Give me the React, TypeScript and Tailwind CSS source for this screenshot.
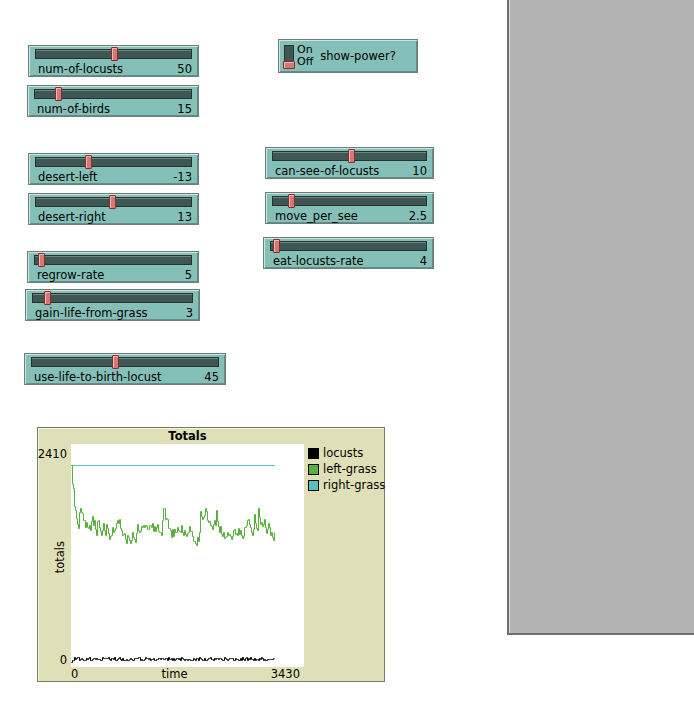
import React from "react";

type SliderProps = {
  x: number;
  y: number;
  w: number;
  label: string;
  value: string;
  thumb: number;
};

// widgets sit at fixed spots on the NetLogo interface canvas
function Slider({ x, y, w, label, value, thumb }: SliderProps) {
  return (
    <div
      className="absolute h-[32px] bg-[#84c0b7] border border-[#6f7d7a] shadow-[inset_1px_1px_0_#c9e6e1,inset_-1px_-1px_0_#5f8f88]"
      style={{ left: x, top: y, width: w }}
    >
      <div className="relative mx-[6px] mt-[3px] h-[10px] bg-[#3f5753] border border-[#26332f] shadow-[inset_0_1px_0_#6d8782]">
        <div
          className="absolute top-[-3px] w-[7px] h-[14px] bg-[#d87676] border border-[#7a3232] rounded-[1px] shadow-[inset_1px_1px_0_#f2b6b6]"
          style={{ left: thumb - 8 }}
        />
      </div>
      <div className="flex justify-between pl-[9px] pr-[6px] mt-[3px] leading-[14px] text-[11.5px] text-black whitespace-nowrap">
        <span>{label}</span>
        <span>{value}</span>
      </div>
    </div>
  );
}

const sliders: SliderProps[] = [
  { x: 28, y: 45, w: 171, label: "num-of-locusts", value: "50", thumb: 83 },
  { x: 27, y: 85, w: 172, label: "num-of-birds", value: "15", thumb: 28 },
  { x: 28, y: 153, w: 171, label: "desert-left", value: "-13", thumb: 57 },
  { x: 28, y: 193, w: 171, label: "desert-right", value: "13", thumb: 81 },
  { x: 27, y: 251, w: 172, label: "regrow-rate", value: "5", thumb: 11 },
  { x: 25, y: 289, w: 175, label: "gain-life-from-grass", value: "3", thumb: 19 },
  { x: 24, y: 353, w: 202, label: "use-life-to-birth-locust", value: "45", thumb: 88 },
  { x: 265, y: 147, w: 169, label: "can-see-of-locusts", value: "10", thumb: 83 },
  { x: 265, y: 192, w: 169, label: "move_per_see", value: "2.5", thumb: 23 },
  { x: 263, y: 237, w: 171, label: "eat-locusts-rate", value: "4", thumb: 10 },
];

// seeded noise so the plot is the same every run
let seed = 11;
function rnd() {
  seed = (seed * 16807) % 2147483647;
  return seed / 2147483647;
}

function stepPath(pts: number[]) {
  let d = `M0.5 ${Math.round(pts[0]) + 0.5}`;
  for (let i = 1; i < pts.length; i++) {
    d += ` H${i + 0.5} V${Math.round(pts[i]) + 0.5}`;
  }
  return d;
}

const greenPts: number[] = (() => {
  const out = [21, 40, 44, 62, 66, 74, 80, 84];
  let v = 84;
  for (let i = out.length; i <= 203; i++) {
    const kick = rnd() < 0.05 ? -(8 + rnd() * 12) : 0;
    v += (86 - v) * 0.22 + (rnd() - 0.5) * 14 + kick;
    v = Math.max(64, Math.min(103, v));
    out.push(v);
  }
  return out;
})();

const blackPts: number[] = (() => {
  const out = [218, 216];
  for (let i = 2; i <= 203; i++) {
    out.push(213 + rnd() * 3.5);
  }
  return out;
})();

const legend = [
  ["locusts", "#000000"],
  ["left-grass", "#59b03c"],
  ["right-grass", "#55c1c1"],
];

function Plot() {
  return (
    <div className="absolute left-[37px] top-[427px] w-[348px] h-[255px] bg-[#e0e0b8] border border-[#7b7b6a] shadow-[inset_1px_1px_0_#f3f3dc] grid grid-cols-[33px_233px_1fr] grid-rows-[16px_223px_1fr] text-[11.5px] leading-[14px]">
      <div />
      <div className="pt-[1px] text-center font-bold">Totals</div>
      <div />

      <div className="flex flex-col justify-between items-end pt-[3px] pr-[4px]">
        <span>2410</span>
        <span className="[writing-mode:vertical-rl] rotate-180">totals</span>
        <span>0</span>
      </div>
      <div className="bg-white">
        <svg width="233" height="223" className="block">
          <path d="M0 21.5 H204" stroke="#55c1c1" strokeWidth="1" fill="none" />
          <path d={stepPath(greenPts)} stroke="#59b03c" strokeWidth="1" fill="none" />
          <path d={stepPath(blackPts)} stroke="#000" strokeWidth="1" fill="none" />
        </svg>
      </div>
      <div className="row-span-2 flex flex-col gap-[4px] pl-[4px] pt-[3px] leading-[12px] whitespace-nowrap">
        {legend.map(([name, color]) => (
          <div key={name} className="flex items-center gap-[4px]">
            <span className="w-[11px] h-[11px] border border-black" style={{ background: color }} />
            <span>{name}</span>
          </div>
        ))}
      </div>

      <div />
      <div className="flex justify-between pr-[4px]">
        <span>0</span>
        <span>time</span>
        <span>3430</span>
      </div>
    </div>
  );
}

function Switch() {
  return (
    <div className="absolute left-[278px] top-[39px] w-[140px] h-[34px] bg-[#84c0b7] border border-[#6f7d7a] shadow-[inset_1px_1px_0_#c9e6e1,inset_-1px_-1px_0_#5f8f88] flex items-start pt-[5px] pl-[4px]">
      <div className="flex flex-col items-center">
        <div className="w-[10px] h-[17px] bg-[#3f5753] border border-[#26332f]" />
        <div className="-mt-[1px] w-[12px] h-[8px] bg-[#d87676] border border-[#7a3232] rounded-[1px] shadow-[inset_1px_1px_0_#f2b6b6]" />
      </div>
      <div className="flex flex-col ml-[2px] -mt-[1px] text-[11px] leading-[12px]">
        <span>On</span>
        <span>Off</span>
      </div>
      <span className="ml-[7px] mt-[4px] text-[11.5px] leading-[14px]">show-power?</span>
    </div>
  );
}

export default function App() {
  return (
    <div className="relative w-[694px] h-[715px] bg-white overflow-hidden font-['DejaVu_Sans',sans-serif] text-black">
      {sliders.map((s) => (
        <Slider key={s.label} {...s} />
      ))}
      <Switch />
      <Plot />
      <div className="absolute left-[507px] top-0 w-[200px] h-[635px] bg-[#b3b3b3] border-l-2 border-b-2 border-[#6e6e6e] shadow-[inset_1px_0_0_#dcdcdc]" />
    </div>
  );
}
